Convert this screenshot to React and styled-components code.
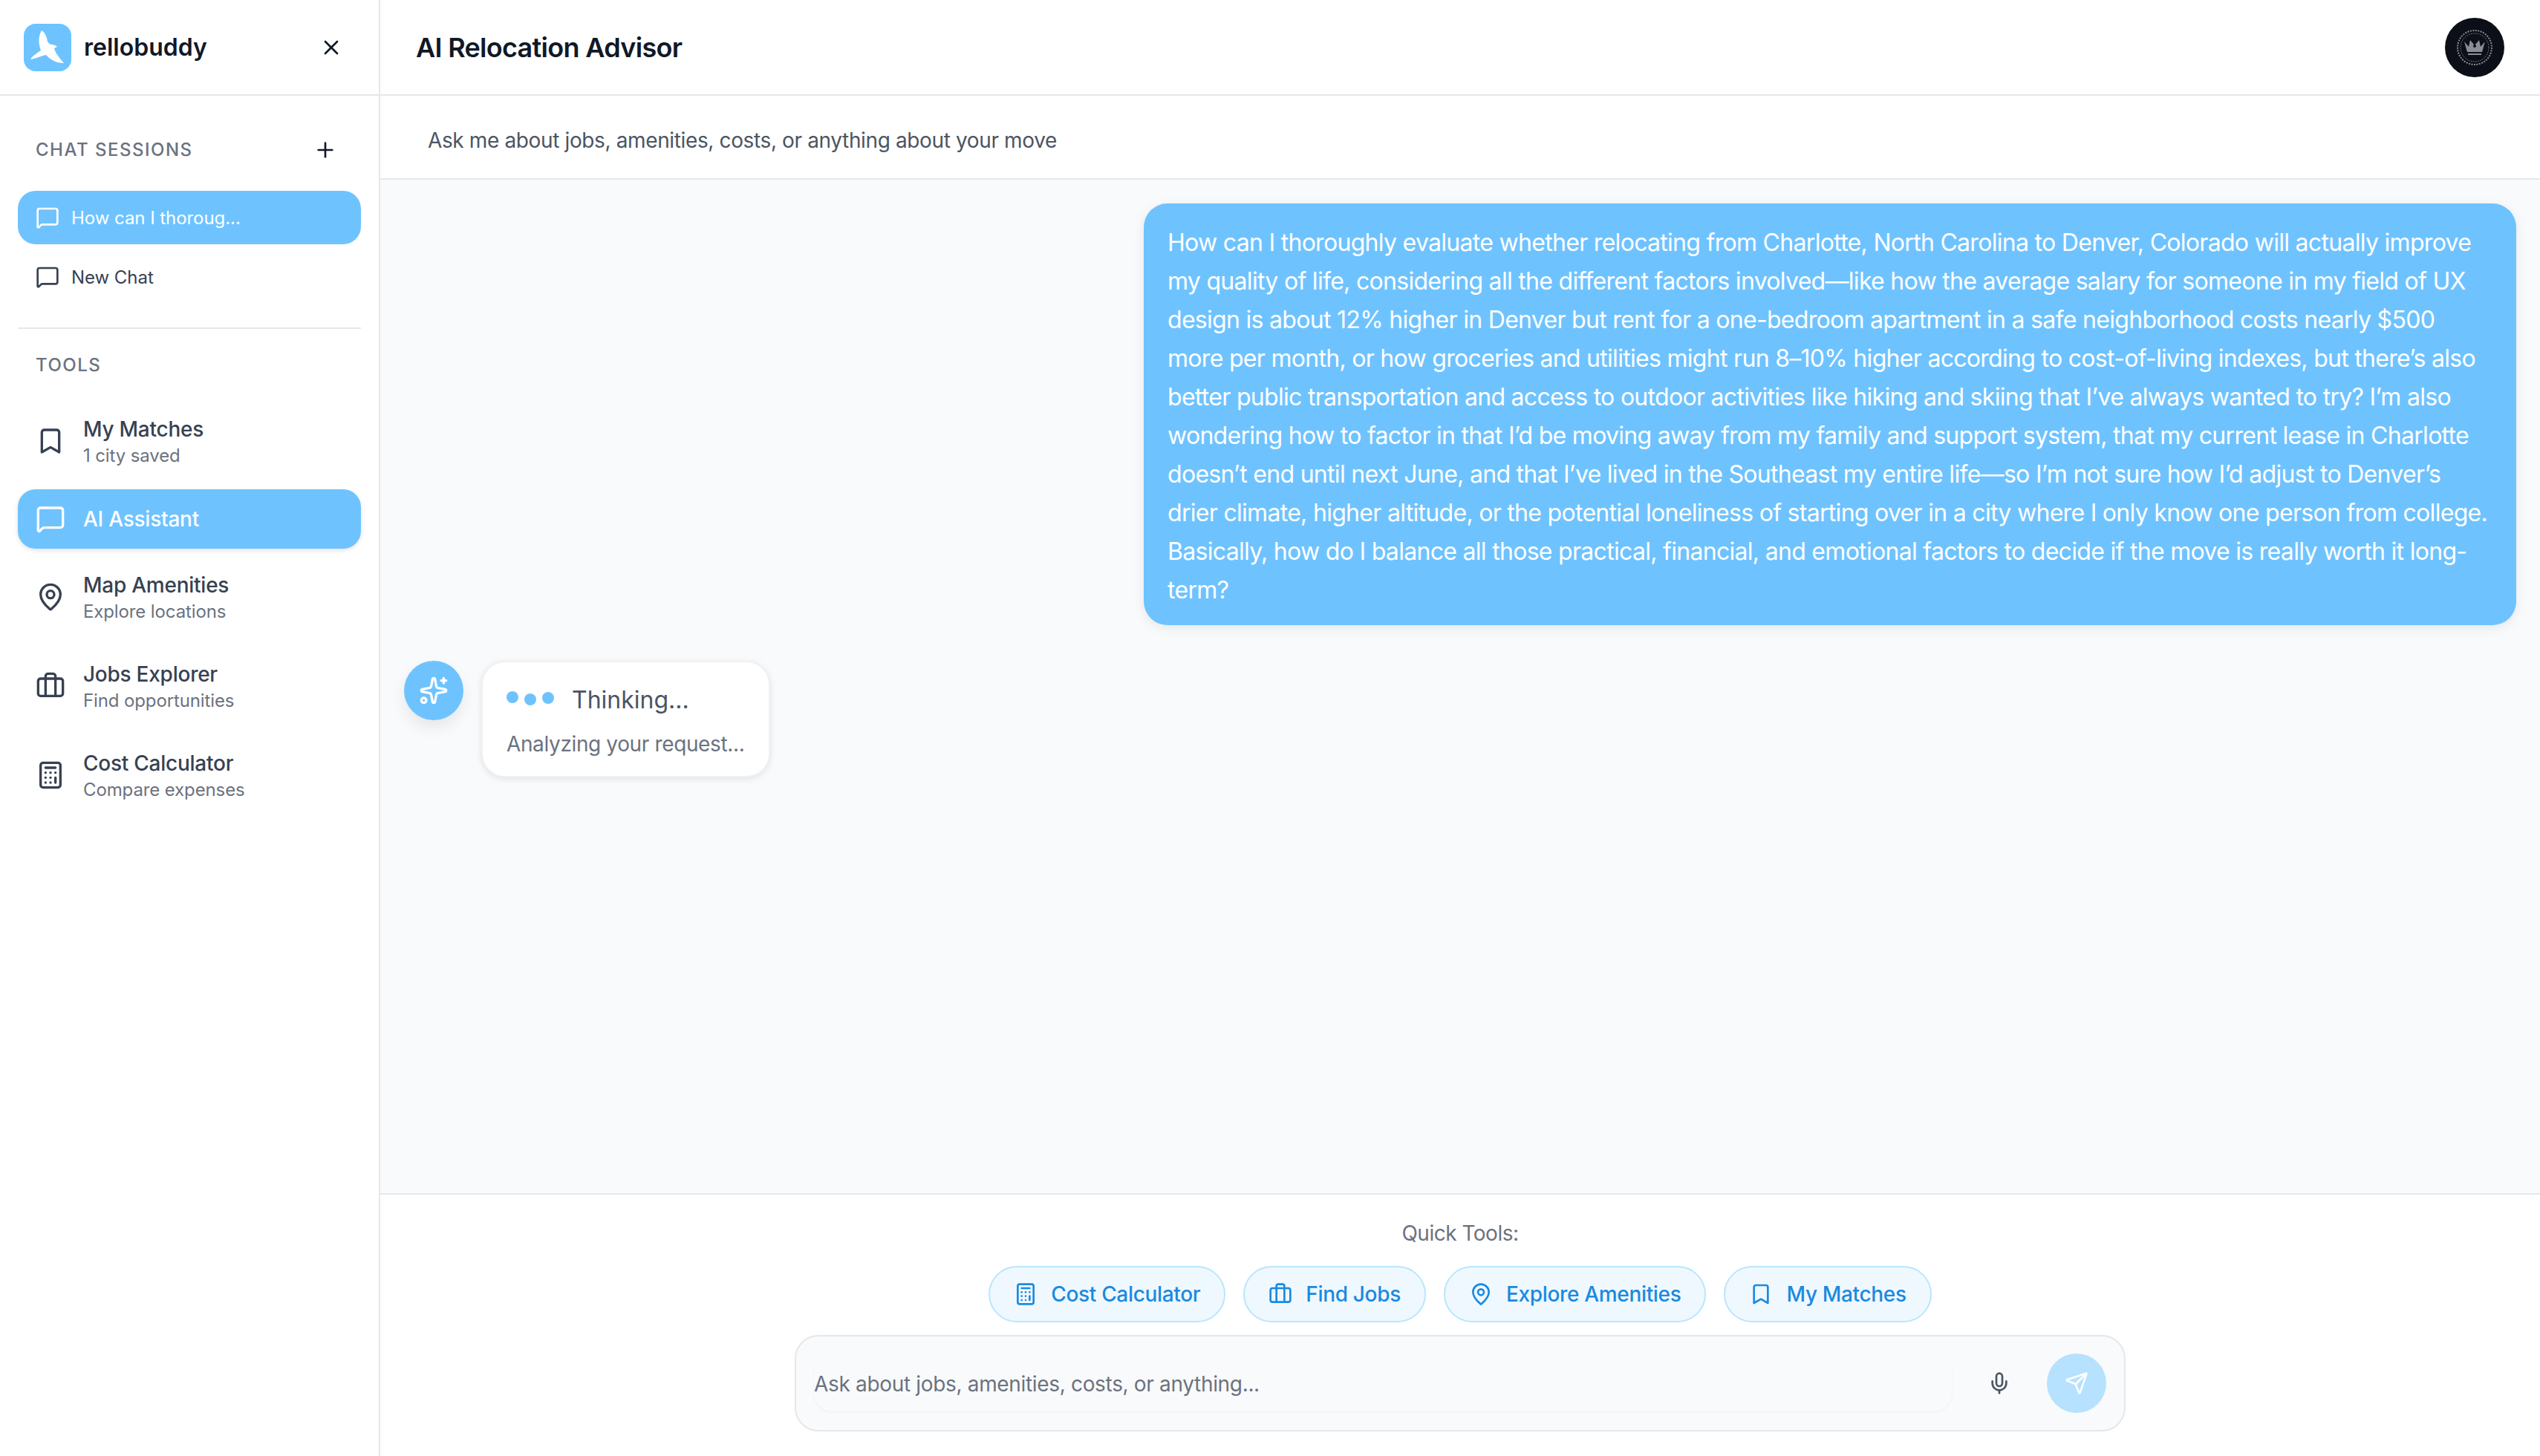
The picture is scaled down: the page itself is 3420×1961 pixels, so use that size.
import React from 'react';
import styled, { createGlobalStyle } from 'styled-components';
import {
  X,
  Plus,
  MessageSquare,
  Bookmark,
  MapPin,
  Briefcase,
  Calculator,
  Sparkles,
  Mic,
  Send
} from 'lucide-react';

const primary = '#6ec3ff';
const line = '#e5e7eb';
const ink = '#111827';
const slate = '#374151';
const muted = '#6b7280';

const GlobalStyle = createGlobalStyle`
  html, body {
    margin: 0;
    padding: 0;
    height: 100%;
    background: #fff;
  }
  * {
    box-sizing: border-box;
  }
  body {
    font-family: Inter, "Liberation Sans", sans-serif;
    color: ${ink};
  }
`;

const Page = styled.div`
  display: flex;
  width: 3420px;
  height: 1961px;
  overflow: hidden;
`;

const Sidebar = styled.aside`
  flex: 0 0 512px;
  display: flex;
  flex-direction: column;
  background: #fff;
  border-right: 2px solid ${line};
`;

const Brand = styled.div`
  flex: 0 0 129px;
  display: flex;
  align-items: center;
  padding: 0 32px;
  border-bottom: 2px solid ${line};
`;

const LogoMark = styled.div`
  width: 64px;
  height: 64px;
  border-radius: 16px;
  background: ${primary};
`;

const BrandName = styled.span`
  margin-left: 17px;
  font-size: 32px;
  font-weight: 600;
  color: ${ink};
  flex: 1;
`;

const IconButton = styled.button`
  display: flex;
  align-items: center;
  justify-content: center;
  padding: 0;
  border: 0;
  background: none;
  color: ${({ $color }) => $color || ink};
`;

const CloseButton = styled(IconButton)`
  margin-right: 16px;
`;

const SidebarBody = styled.div`
  padding: 49px 24px 0;
`;

const SectionHead = styled.div`
  display: flex;
  align-items: center;
  justify-content: space-between;
  height: 48px;
  padding: 0 32px 0 24px;
  margin-bottom: 31px;
`;

const SectionLabel = styled.h3`
  margin: 0;
  font-size: 24px;
  line-height: 32px;
  font-weight: 500;
  letter-spacing: 1.5px;
  text-transform: uppercase;
  color: ${muted};
`;

const SessionList = styled.div`
  display: flex;
  flex-direction: column;
  gap: 8px;
`;

const SessionRow = styled.div`
  display: flex;
  align-items: center;
  gap: 16px;
  height: 72px;
  padding: 0 24px;
  border-radius: 24px;
  font-size: 24px;
  letter-spacing: -0.05px;
  background: ${({ $active }) => ($active ? primary : 'transparent')};
  color: ${({ $active }) => ($active ? '#fff' : slate)};
`;

const Divider = styled.hr`
  margin: 32px 0 33px;
  border: 0;
  border-top: 2px solid ${line};
`;

const ToolsLabel = styled(SectionLabel)`
  padding-left: 24px;
  margin-bottom: 31px;
`;

const ToolList = styled.nav`
  display: flex;
  flex-direction: column;
  gap: 10px;
`;

const ToolRow = styled.div`
  display: flex;
  align-items: center;
  gap: 24px;
  min-height: ${({ $active }) => ($active ? '80px' : '110px')};
  padding: 0 24px;
  border-radius: 24px;
  background: ${({ $active }) => ($active ? primary : 'transparent')};
  color: ${({ $active }) => ($active ? '#fff' : slate)};
  box-shadow: ${({ $active }) => ($active ? '0 2px 6px rgba(0,0,0,.12)' : 'none')};
`;

const ToolText = styled.div`
  display: flex;
  flex-direction: column;
`;

const ToolTitle = styled.span`
  font-size: 28px;
  line-height: 40px;
  font-weight: 500;
  letter-spacing: -0.25px;
`;

const ToolSub = styled.span`
  font-size: 24px;
  line-height: 32px;
  letter-spacing: -0.12px;
  color: ${muted};
`;

const Main = styled.main`
  flex: 1;
  min-width: 0;
  display: flex;
  flex-direction: column;
`;

const TopBar = styled.header`
  flex: 0 0 129px;
  display: flex;
  align-items: center;
  justify-content: space-between;
  padding: 0 48px;
  border-bottom: 2px solid ${line};
`;

const PageTitle = styled.h1`
  margin: 0;
  font-size: 36px;
  font-weight: 600;
  letter-spacing: -0.7px;
  color: ${ink};
`;

const Avatar = styled.div`
  width: 80px;
  height: 80px;
  border-radius: 50%;
  background: #0c0f18;
  display: flex;
  align-items: center;
  justify-content: center;
`;

const Intro = styled.div`
  flex: 0 0 113px;
  display: flex;
  align-items: center;
  padding: 8px 64px 0;
  font-size: 28px;
  letter-spacing: -0.37px;
  color: #4b5563;
  border-bottom: 2px solid ${line};
`;

const Messages = styled.section`
  flex: 1;
  min-height: 0;
  display: flex;
  flex-direction: column;
  gap: 48px;
  padding: 32px;
  background: #f9fafb;
`;

const UserBubble = styled.div`
  align-self: flex-end;
  width: 1848px;
  padding: 27px 32px 21px;
  border-radius: 32px;
  background: ${primary};
  color: #fff;
  font-size: 32px;
  line-height: 52px;
  letter-spacing: -0.7px;
  box-shadow: 0 4px 16px rgba(0, 0, 0, 0.08);
`;

const ThinkingRow = styled.div`
  display: flex;
  align-items: flex-start;
  gap: 24px;
`;

const BotAvatar = styled.div`
  flex: 0 0 80px;
  height: 80px;
  border-radius: 50%;
  background: ${primary};
  color: #fff;
  display: flex;
  align-items: center;
  justify-content: center;
  box-shadow: 0 10px 20px rgba(0, 0, 0, 0.08);
`;

const ThinkingCard = styled.div`
  width: 389px;
  height: 157px;
  padding: 30px 32px;
  border-radius: 32px;
  background: #fff;
  border: 2px solid #f0f1f4;
  box-shadow: 0 2px 8px rgba(0, 0, 0, 0.1);
`;

const ThinkingLine = styled.div`
  display: flex;
  align-items: center;
  gap: 8px;
  height: 40px;
`;

const Dot = styled.span`
  width: 16px;
  height: 16px;
  border-radius: 50%;
  background: ${primary};
  transform: translateY(${({ $lift }) => $lift}px);
`;

const ThinkingLabel = styled.span`
  margin-left: 16px;
  font-size: 32px;
  color: #4b5563;
`;

const ThinkingSub = styled.div`
  margin-top: 20px;
  font-size: 28px;
  line-height: 40px;
  letter-spacing: -0.37px;
  white-space: nowrap;
  color: ${muted};
`;

const Footer = styled.footer`
  flex: 0 0 354px;
  display: flex;
  flex-direction: column;
  align-items: center;
  padding-top: 32px;
  background: #fff;
  border-top: 2px solid ${line};
`;

const QuickLabel = styled.div`
  font-size: 28px;
  line-height: 40px;
  letter-spacing: -0.5px;
  color: ${muted};
`;

const ChipRow = styled.div`
  display: flex;
  gap: 24px;
  margin-top: 24px;
`;

const Chip = styled.button`
  display: flex;
  align-items: center;
  gap: 18px;
  height: 76px;
  padding: 0 32px;
  border: 2px solid #bae6fd;
  border-radius: 38px;
  background: #eff8ff;
  color: #1a8ae0;
  font-family: inherit;
  font-size: 28px;
  font-weight: 500;
  letter-spacing: -0.33px;
`;

const Composer = styled.div`
  width: 1792px;
  height: 130px;
  margin-top: 17px;
  display: flex;
  align-items: center;
  gap: 24px;
  padding: 0 24px;
  border: 2px solid ${line};
  border-radius: 32px;
  background: #f9fafb;
`;

const ComposerInput = styled.input`
  flex: 1;
  height: 76px;
  padding: 2px 0 0;
  border: 0;
  border-radius: 24px;
  outline: 0;
  background: transparent;
  font-family: inherit;
  font-size: 28px;
  letter-spacing: -0.33px;
  box-shadow: 0 1px 3px rgba(0, 0, 0, 0.05);
  &::placeholder {
    color: ${muted};
    opacity: 1;
  }
`;

const MicButton = styled(IconButton)`
  flex: 0 0 80px;
  height: 80px;
`;

const SendButton = styled(IconButton)`
  flex: 0 0 80px;
  height: 80px;
  border-radius: 50%;
  background: #b6e1ff;
`;

function BirdLogo() {
  return (
    <svg width="64" height="64" viewBox="0 0 64 64" fill="#fff">
      <path d="M24 9 C28 11 31 17 32 24 C34 27 36 28 38 28 C40 28 43 29 45 31 L41 33 C42 38 47 45 54 53 C46 53 37 50 30 42 C24 43 16 47 9 48 C11 44 17 40 23 36 C20 28 19 17 24 9 Z" />
    </svg>
  );
}

function CrownSeal() {
  return (
    <svg width="50" height="50" viewBox="0 0 50 50" fill="none" stroke="#8a8d94">
      <circle cx="25" cy="25" r="23" strokeWidth="2" strokeDasharray="2 1.5" />
      <circle cx="25" cy="25" r="19" strokeWidth="1" strokeDasharray="1.5 1.5" />
      <path
        d="M11 17 L17 24 L19 15 L25 22 L31 15 L33 24 L39 17 L35 31 L15 31 Z"
        fill="#8a8d94"
        stroke="none"
      />
      <path d="M16 34 H34" strokeWidth="2" />
      <circle cx="25" cy="23" r="2" fill="#0c0f18" stroke="none" />
    </svg>
  );
}

const tools = [
  { title: 'My Matches', sub: '1 city saved', icon: Bookmark },
  { title: 'AI Assistant', icon: MessageSquare, active: true },
  { title: 'Map Amenities', sub: 'Explore locations', icon: MapPin },
  { title: 'Jobs Explorer', sub: 'Find opportunities', icon: Briefcase },
  { title: 'Cost Calculator', sub: 'Compare expenses', icon: Calculator }
];

const chips = [
  { label: 'Cost Calculator', icon: Calculator },
  { label: 'Find Jobs', icon: Briefcase },
  { label: 'Explore Amenities', icon: MapPin },
  { label: 'My Matches', icon: Bookmark }
];

const question =
  'How can I thoroughly evaluate whether relocating from Charlotte, North Carolina to Denver, Colorado will actually improve my quality of life, considering all the different factors involved—like how the average salary for someone in my field of UX design is about 12% higher in Denver but rent for a one-bedroom apartment in a safe neighborhood costs nearly $500 more per month, or how groceries and utilities might run 8–10% higher according to cost-of-living indexes, but there’s also better public transportation and access to outdoor activities like hiking and skiing that I’ve always wanted to try? I’m also wondering how to factor in that I’d be moving away from my family and support system, that my current lease in Charlotte doesn’t end until next June, and that I’ve lived in the Southeast my entire life—so I’m not sure how I’d adjust to Denver’s drier climate, higher altitude, or the potential loneliness of starting over in a city where I only know one person from college. Basically, how do I balance all those practical, financial, and emotional factors to decide if the move is really worth it long-term?';

export default function App() {
  return (
    <Page>
      <GlobalStyle />
      <Sidebar>
        <Brand>
          <LogoMark>
            <BirdLogo />
          </LogoMark>
          <BrandName>rellobuddy</BrandName>
          <CloseButton>
            <X size={32} />
          </CloseButton>
        </Brand>
        <SidebarBody>
          <SectionHead>
            <SectionLabel>Chat Sessions</SectionLabel>
            <IconButton>
              <Plus size={32} />
            </IconButton>
          </SectionHead>
          <SessionList>
            <SessionRow $active>
              <MessageSquare size={32} />
              How can I thoroug...
            </SessionRow>
            <SessionRow>
              <MessageSquare size={32} />
              New Chat
            </SessionRow>
          </SessionList>
          <Divider />
          <ToolsLabel>Tools</ToolsLabel>
          <ToolList>
            {tools.map(({ title, sub, icon: Icon, active }) => (
              <ToolRow key={title} $active={active}>
                <Icon size={40} />
                <ToolText>
                  <ToolTitle>{title}</ToolTitle>
                  {sub && <ToolSub>{sub}</ToolSub>}
                </ToolText>
              </ToolRow>
            ))}
          </ToolList>
        </SidebarBody>
      </Sidebar>
      <Main>
        <TopBar>
          <PageTitle>AI Relocation Advisor</PageTitle>
          <Avatar>
            <CrownSeal />
          </Avatar>
        </TopBar>
        <Intro>Ask me about jobs, amenities, costs, or anything about your move</Intro>
        <Messages>
          <UserBubble>{question}</UserBubble>
          <ThinkingRow>
            <BotAvatar>
              <Sparkles size={40} />
            </BotAvatar>
            <ThinkingCard>
              <ThinkingLine>
                <Dot $lift={-3} />
                <Dot $lift={0} />
                <Dot $lift={-2} />
                <ThinkingLabel>Thinking...</ThinkingLabel>
              </ThinkingLine>
              <ThinkingSub>Analyzing your request...</ThinkingSub>
            </ThinkingCard>
          </ThinkingRow>
        </Messages>
        <Footer>
          <QuickLabel>Quick Tools:</QuickLabel>
          <ChipRow>
            {chips.map(({ label, icon: Icon }) => (
              <Chip key={label}>
                <Icon size={32} />
                {label}
              </Chip>
            ))}
          </ChipRow>
          <Composer>
            <ComposerInput placeholder="Ask about jobs, amenities, costs, or anything..." />
            <MicButton $color="#4b5563">
              <Mic size={32} />
            </MicButton>
            <SendButton $color="#fff">
              <Send size={32} />
            </SendButton>
          </Composer>
        </Footer>
      </Main>
    </Page>
  );
}
